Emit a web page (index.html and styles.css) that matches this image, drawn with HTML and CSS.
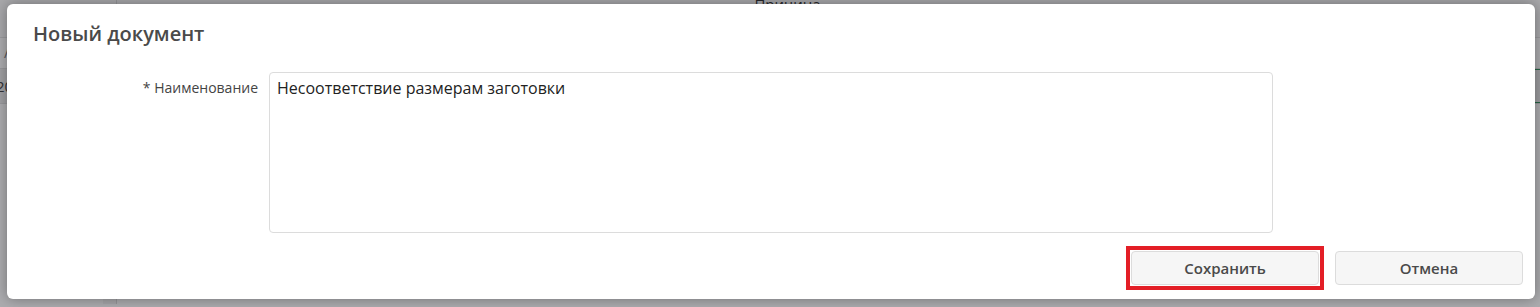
FILE: index.html
```html
<!DOCTYPE html>
<html lang="ru">
<head>
    <meta charset="UTF-8">
    <title>Новый документ</title>
    <link rel="stylesheet" href="styles.css">
</head>
<body>
    <div class="page">
        <div class="page-head">
            <span class="col-left"></span>
            <span class="col-title">Причина</span>
        </div>
        <div class="page-filter"><span class="filter-mark">/</span></div>
        <div class="page-row">
            <span class="row-num">20</span>
            <span class="row-btn"></span>
        </div>
        <div class="page-body">
            <span class="body-col"></span>
        </div>
    </div>

    <div class="overlay"></div>

    <div class="modal">
        <div class="modal-head">Новый документ</div>
        <form class="modal-form" action="" method="post">
            <div class="field">
                <label class="field-label">* Наименование</label>
                <textarea class="field-input" name="name">Несоответствие размерам заготовки</textarea>
            </div>
            <div class="actions">
                <button type="submit" class="btn btn-marked">Сохранить</button>
                <button type="reset" class="btn">Отмена</button>
            </div>
        </form>
    </div>
</body>
</html>
```

FILE: styles.css
```css
html, body {
    margin: 0;
    height: 100%;
}
body {
    background: #fafafa;
    font-family: "Open Sans", "Noto Sans", sans-serif;
    overflow: hidden;
}

/* page behind the dialog */
.page {
    height: 100%;
    margin-top: -10px;
}
.page-head {
    display: flex;
    height: 47px;
    border-bottom: 1px solid #e0e0e0;
    background: #f4f4f4;
}
.col-left {
    width: 116px;
    border-right: 1px solid #d8d8d8;
}
.col-title {
    flex: 1;
    text-align: center;
    padding-right: 82px;
    font-size: 15px;
    line-height: 28px;
    color: #333;
}
.page-filter {
    height: 30px;
    border-bottom: 1px solid #ddd;
}
.filter-mark {
    font-size: 14px;
    color: #777;
    margin-left: 4px;
    line-height: 30px;
}
.page-row {
    display: flex;
    justify-content: space-between;
    height: 34px;
    background: #e8e8e8;
    border-bottom: 1px solid #ddd;
}
.row-num {
    font-size: 15px;
    line-height: 34px;
    color: #444;
    margin-left: -4px;
}
.row-btn {
    width: 40px;
    height: 32px;
    border: 1px solid #2f8f5a;
    background: #e3e3e3;
    margin-right: -32px;
}
.page-body {
    display: flex;
    height: 200px;
}
.body-col {
    width: 116px;
    border-right: 1px solid #d8d8d8;
    box-shadow: inset -13px 0 0 #f0f0f0;
}

.overlay {
    position: absolute;
    inset: 0;
    background: rgba(20, 20, 28, 0.34);
}

/* dialog */
.modal {
    position: absolute;
    left: 7px;
    top: 4px;
    width: 1528px;
    height: 295px;
    background: #fff;
    border-radius: 6px;
    box-shadow: 0 0 14px rgba(0, 0, 0, 0.35);
    box-sizing: border-box;
    padding: 16px 12px 14px 26px;
}
.modal-head {
    font-size: 20px;
    line-height: 28px;
    font-weight: 600;
    color: #4a4a4a;
}
.modal-form {
    margin: 24px 0 0;
}
.field {
    display: flex;
    align-items: flex-start;
}
.field-label {
    width: 225px;
    text-align: right;
    font-size: 14px;
    line-height: 20px;
    padding-top: 6px;
    color: #444;
    margin-right: 11px;
}
.field-input {
    width: 1004px;
    height: 161px;
    box-sizing: border-box;
    border: 1px solid #dcdcdc;
    border-radius: 4px;
    padding: 4px 7px;
    font-family: "Open Sans", "Noto Sans", sans-serif;
    font-size: 16px;
    line-height: 22px;
    color: #222;
    resize: none;
    outline: none;
}
.actions {
    display: flex;
    justify-content: flex-end;
    gap: 16px;
    margin-top: 18px;
}
.btn {
    width: 188px;
    height: 34px;
    border: 1px solid #dcdcdc;
    border-radius: 4px;
    background: #f6f6f6;
    font-family: "Open Sans", "Noto Sans", sans-serif;
    font-size: 15px;
    font-weight: 600;
    color: #4a4a4a;
}
.btn-marked {
    position: relative;
}
.btn-marked::after {
    content: "";
    position: absolute;
    inset: -6px;
    border: 4px solid #e31e26;
}
```
